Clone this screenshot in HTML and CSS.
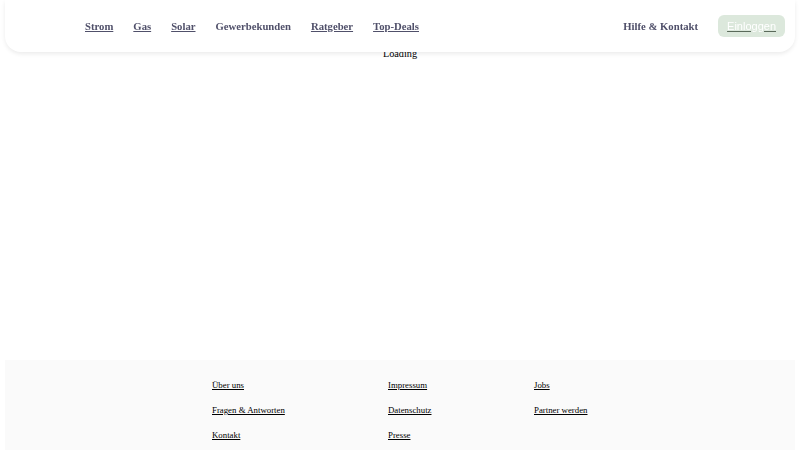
FILE: index.html
```html
<!DOCTYPE html>
<html lang="de">
<head>
<meta charset="utf-8">
<title>Loading</title>
<link rel="stylesheet" href="styles.css">
</head>
<body>
<header class="topbar">
  <nav class="mainnav">
    <a class="nav-link" href="#">Strom</a>
    <a class="nav-link" href="#">Gas</a>
    <a class="nav-link" href="#">Solar</a>
    <span class="nav-link plain">Gewerbekunden</span>
    <a class="nav-link" href="#">Ratgeber</a>
    <a class="nav-link" href="#">Top-Deals</a>
  </nav>
  <div class="actions">
    <span class="nav-link plain">Hilfe &amp; Kontakt</span>
    <a class="login" href="#">Einloggen</a>
  </div>
</header>
<main class="content">
  <p class="loading">Loading</p>
</main>
<footer class="footer">
  <div class="footer-grid">
    <a href="#">Über uns</a>
    <a href="#">Impressum</a>
    <a href="#">Jobs</a>
    <a href="#">Fragen &amp; Antworten</a>
    <a href="#">Datenschutz</a>
    <a href="#">Partner werden</a>
    <a href="#">Kontakt</a>
    <a href="#">Presse</a>
  </div>
</footer>
</body>
</html>
```
FILE: styles.css
```css
html, body {
  margin: 0;
  padding: 0;
  background: #ffffff;
}
body {
  font-family: "Liberation Serif", "Times New Roman", serif;
  padding: 0 5px;
}
.topbar {
  position: fixed;
  top: 0;
  left: 5px;
  right: 5px;
  height: 52px;
  box-sizing: border-box;
  background: #ffffff;
  border-radius: 0 0 16px 16px;
  box-shadow: 0 2px 4px rgba(0, 0, 0, 0.08);
  display: flex;
  align-items: center;
  justify-content: space-between;
  padding: 0 10px 0 80px;
  z-index: 10;
}
.mainnav, .actions {
  display: flex;
  align-items: center;
  gap: 20px;
}
.nav-link {
  font-family: "Liberation Serif", "Times New Roman", serif;
  font-weight: bold;
  font-size: 10.7px;
  color: #50506a;
  text-decoration: underline;
}
.nav-link.plain {
  text-decoration: none;
}
.login {
  font-family: "Liberation Sans", Arial, sans-serif;
  font-size: 11px;
  color: #ffffff;
  text-decoration: underline;
  text-decoration-color: #5a6a5a;
  background: #dce8dc;
  border-radius: 6px;
  padding: 4px 9px;
  line-height: 14px;
}
.content {
  min-height: 360px;
  padding-top: 48px;
  box-sizing: border-box;
}
.loading {
  margin: 0;
  text-align: center;
  font-size: 10.25px;
  color: #000000;
}
.footer {
  background: #fafafa;
  padding: 19px 0 19px 207px;
}
.footer-grid {
  display: grid;
  grid-template-columns: 176px 146px 120px;
  row-gap: 13px;
}
.footer-grid a {
  font-size: 8.8px;
  color: #000000;
  text-decoration: underline;
  line-height: 12px;
}
```
